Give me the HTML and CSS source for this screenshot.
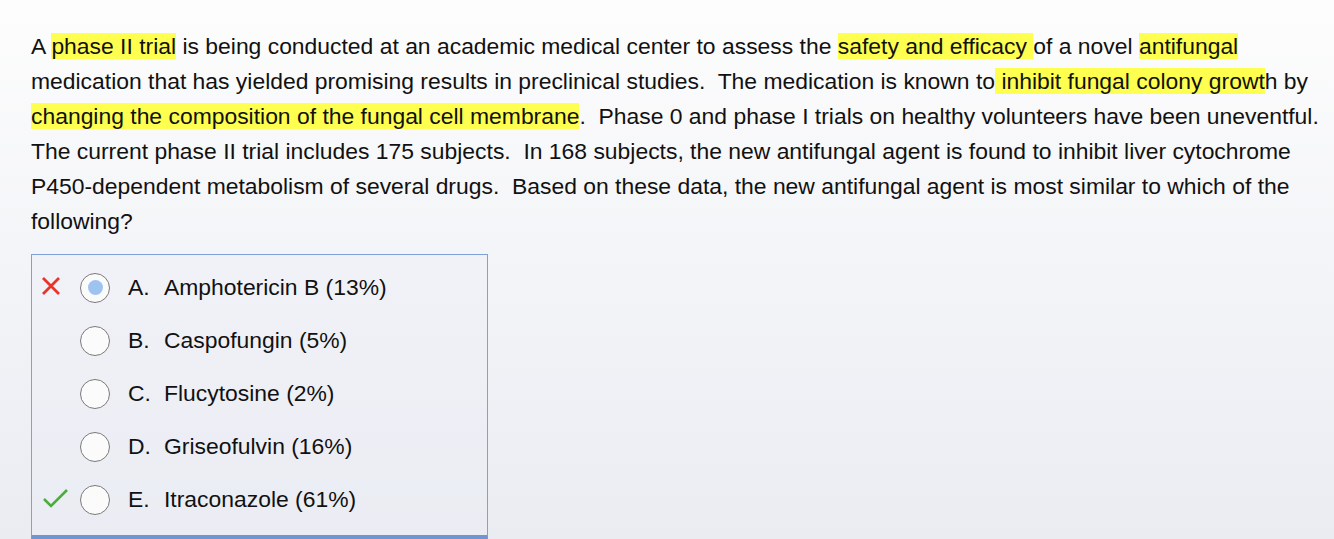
FILE: index.html
```html
<!DOCTYPE html>
<html lang="en">
<head>
<meta charset="utf-8">
<title>Question</title>
<link rel="stylesheet" href="styles.css">
</head>
<body>
<main class="question">
  <p class="stem">A <mark>phase II trial</mark> is being conducted at an academic medical center to assess the <mark>safety and efficacy </mark>of a novel <mark>antifungal</mark> medication that has yielded promising results in preclinical studies.&nbsp; The medication is known to<mark> inhibit fungal colony growt</mark>h by <mark>changing the composition of the fungal cell membrane</mark>.&nbsp; Phase 0 and phase I trials on healthy volunteers have been uneventful. The current phase II trial includes 175 subjects.&nbsp; In 168 subjects, the new antifungal agent is found to inhibit liver cytochrome P450-dependent metabolism of several drugs.&nbsp; Based on these data, the new antifungal agent is most similar to which of the following?</p>

  <ul class="choices">
    <li class="choice">
      <span class="mark-col">
        <svg class="icon-x" width="20" height="20" viewBox="0 0 20 20"><path d="M2 2 L18 18 M18 2 L2 18" stroke="#e8352b" stroke-width="2.8" stroke-linecap="butt" fill="none"/></svg>
      </span>
      <span class="radio radio-selected"></span>
      <span class="label"><span class="letter">A.</span>Amphotericin B (13%)</span>
    </li>
    <li class="choice">
      <span class="mark-col"></span>
      <span class="radio"></span>
      <span class="label"><span class="letter">B.</span>Caspofungin (5%)</span>
    </li>
    <li class="choice">
      <span class="mark-col"></span>
      <span class="radio"></span>
      <span class="label"><span class="letter">C.</span>Flucytosine (2%)</span>
    </li>
    <li class="choice">
      <span class="mark-col"></span>
      <span class="radio"></span>
      <span class="label"><span class="letter">D.</span>Griseofulvin (16%)</span>
    </li>
    <li class="choice">
      <span class="mark-col">
        <svg class="icon-check" width="28" height="22" viewBox="0 0 28 22"><path d="M2 12 L9 19 L25 3" stroke="#4aae3c" stroke-width="2.6" stroke-linecap="butt" stroke-linejoin="miter" fill="none"/></svg>
      </span>
      <span class="radio"></span>
      <span class="label"><span class="letter">E.</span>Itraconazole (61%)</span>
    </li>
  </ul>
</main>
</body>
</html>
```

FILE: styles.css
```css
html {
  height: 100%;
}

body {
  margin: 0;
  min-height: 100%;
  background: linear-gradient(180deg, #fdfdfd 0%, #f4f5f8 45%, #ebecf2 100%);
  font-family: "Liberation Sans", Arial, Helvetica, sans-serif;
  color: #111;
  overflow: hidden;
}

.question {
  padding: 29px 0 0 31px;
}

.stem {
  margin: 0;
  width: 1300px;
  font-size: 22.9px;
  line-height: 35px;
}

.stem mark {
  background: #ffff4f;
  color: inherit;
}

.choices {
  list-style: none;
  margin: 15px 0 0;
  padding: 6px 0 9px;
  width: 455px;
  border: 1px solid #7ea2d8;
  border-bottom: 6px solid #6f96d0;
  background: rgba(235, 237, 245, 0.35);
}

.choice {
  display: flex;
  align-items: center;
  height: 53px;
}

.mark-col {
  width: 48px;
  display: flex;
  justify-content: center;
  align-items: center;
}

.icon-x {
  margin-left: -10px;
  margin-top: -3px;
}

.icon-check {
  margin-left: -1px;
  margin-top: -4px;
}

.radio {
  box-sizing: border-box;
  width: 30px;
  height: 30px;
  border: 1.5px solid #7a7a7a;
  border-radius: 50%;
  background: #fbfbfc;
  display: flex;
  align-items: center;
  justify-content: center;
}

.radio-selected::after {
  content: "";
  width: 15px;
  height: 15px;
  border-radius: 50%;
  background: #9fc3f1;
}

.label {
  margin-left: 18px;
  font-size: 22.9px;
}

.letter {
  display: inline-block;
  width: 36px;
}
```
